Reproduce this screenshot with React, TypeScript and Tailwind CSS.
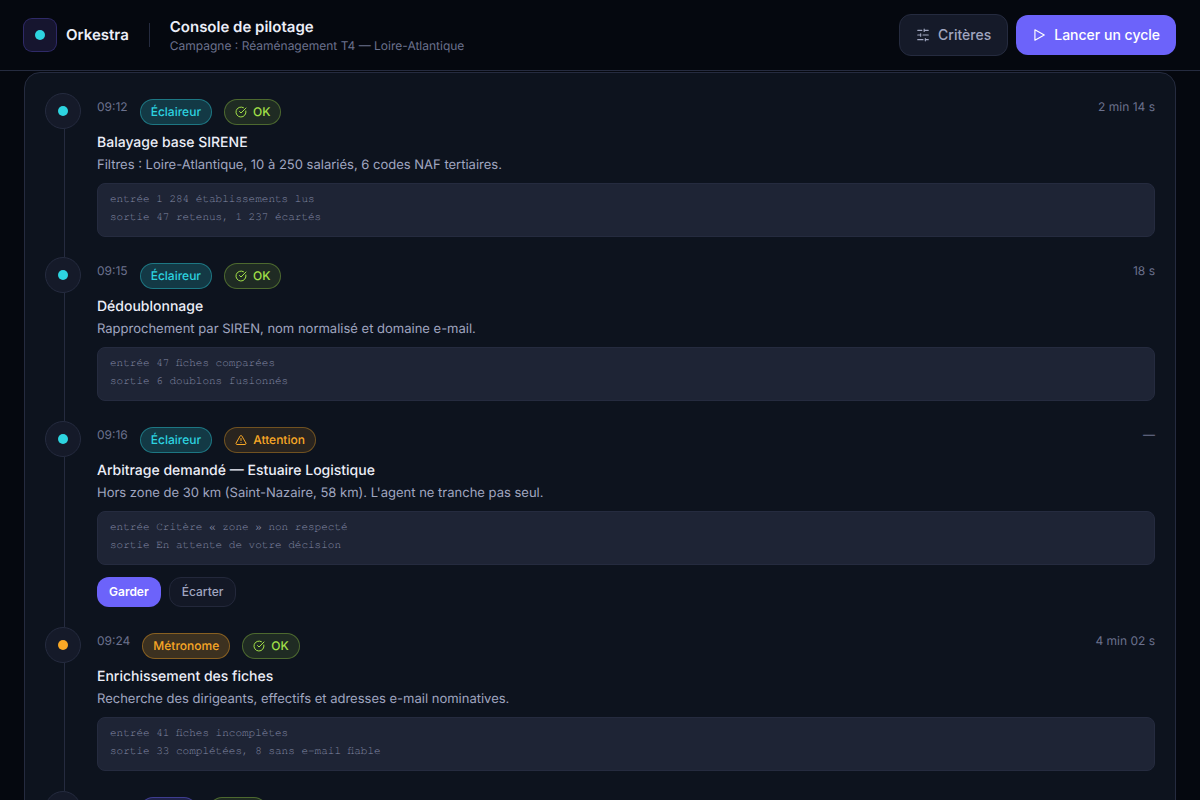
import type { ReactNode } from "react";

type Agent = "eclaireur" | "metronome" | "plume";
type Status = "ok" | "warning";

interface Step {
  time: string;
  agent: Agent;
  status: Status;
  duration: string;
  title: string;
  description: string;
  input: string;
  output: string;
  needsDecision?: boolean;
}

const AGENTS: Record<Agent, { label: string; dot: string; badge: string }> = {
  eclaireur: {
    label: "Éclaireur",
    dot: "bg-[#2dd4e0]",
    badge: "border-[#2dd4e0]/40 bg-[#2dd4e0]/20 text-[#2dd4e0]",
  },
  metronome: {
    label: "Métronome",
    dot: "bg-[#f9a826]",
    badge: "border-[#f9a826]/40 bg-[#f9a826]/20 text-[#f9a826]",
  },
  plume: {
    label: "Plume",
    dot: "bg-[#6c63fa]",
    badge: "border-[#6c63fa]/40 bg-[#6c63fa]/20 text-[#8f88ff]",
  },
};

const STEPS: Step[] = [
  {
    time: "09:12",
    agent: "eclaireur",
    status: "ok",
    duration: "2 min 14 s",
    title: "Balayage base SIRENE",
    description: "Filtres : Loire-Atlantique, 10 à 250 salariés, 6 codes NAF tertiaires.",
    input: "1 284 établissements lus",
    output: "47 retenus, 1 237 écartés",
  },
  {
    time: "09:15",
    agent: "eclaireur",
    status: "ok",
    duration: "18 s",
    title: "Dédoublonnage",
    description: "Rapprochement par SIREN, nom normalisé et domaine e-mail.",
    input: "47 fiches comparées",
    output: "6 doublons fusionnés",
  },
  {
    time: "09:16",
    agent: "eclaireur",
    status: "warning",
    duration: "—",
    title: "Arbitrage demandé — Estuaire Logistique",
    description: "Hors zone de 30 km (Saint-Nazaire, 58 km). L'agent ne tranche pas seul.",
    input: "Critère « zone » non respecté",
    output: "En attente de votre décision",
    needsDecision: true,
  },
  {
    time: "09:24",
    agent: "metronome",
    status: "ok",
    duration: "4 min 02 s",
    title: "Enrichissement des fiches",
    description: "Recherche des dirigeants, effectifs et adresses e-mail nominatives.",
    input: "41 fiches incomplètes",
    output: "33 complétées, 8 sans e-mail fiable",
  },
  {
    time: "09:31",
    agent: "plume",
    status: "ok",
    duration: "3 min 20 s",
    title: "Rédaction des messages",
    description: "Premiers messages préparés pour les fiches complètes.",
    input: "33 fiches complètes",
    output: "33 messages rédigés",
  },
];

function Icon({ className, children }: { className: string; children: ReactNode }) {
  return (
    <svg
      className={className}
      viewBox="0 0 24 24"
      fill="none"
      stroke="currentColor"
      strokeWidth={2}
      strokeLinecap="round"
      strokeLinejoin="round"
      aria-hidden="true"
    >
      {children}
    </svg>
  );
}

function SlidersIcon() {
  return (
    <Icon className="size-3.5">
      <path d="M21 4h-7M10 4H3M21 12h-9M8 12H3M21 20h-5M12 20H3M14 2v4M8 10v4M16 18v4" />
    </Icon>
  );
}

function StatusBadge({ status }: { status: Status }) {
  if (status === "warning") {
    return (
      <span className="inline-flex items-center gap-1.5 rounded-full border border-[#f9a826]/35 bg-[#f9a826]/12 px-2.5 py-1 text-xs font-medium text-[#f9a826]">
        <Icon className="size-3">
          <path d="m21.73 18-8-14a2 2 0 0 0-3.48 0l-8 14A2 2 0 0 0 4 21h16a2 2 0 0 0 1.73-3M12 9v4M12 17h.01" />
        </Icon>
        Attention
      </span>
    );
  }
  return (
    <span className="inline-flex items-center gap-1.5 rounded-full border border-[#a3e048]/35 bg-[#a3e048]/12 px-2.5 py-1 text-xs font-medium text-[#a3e048]">
      <Icon className="size-3">
        <path d="M21.8 10A10 10 0 1 1 17 3.34M9 11l3 3L22 4" />
      </Icon>
      OK
    </span>
  );
}

function TimelineItem({ step }: { step: Step }) {
  const agent = AGENTS[step.agent];

  return (
    <li className="flex gap-4">
      {/* Rail */}
      <div className="flex w-9 shrink-0 flex-col">
        <span className="flex size-9 items-center justify-center rounded-full border border-[#252b3f] bg-[#151a29]">
          <span className={`size-2.5 rounded-full ${agent.dot}`} />
        </span>
        <span className="ml-[19px] w-px flex-1 bg-[#252b3f]" />
      </div>

      <div className="min-w-0 flex-1 pt-1.5 pb-5">
        <div className="flex items-start gap-3">
          <time className="text-xs text-[#6b718d]">{step.time}</time>
          <span className={`inline-flex rounded-full border px-2.5 py-1 text-xs font-medium ${agent.badge}`}>
            {agent.label}
          </span>
          <StatusBadge status={step.status} />
          <span className="ml-auto text-xs text-[#6b718d]">{step.duration}</span>
        </div>

        <h3 className="mt-2 text-sm leading-5 font-medium text-[#eceef8]">{step.title}</h3>
        <p className="mt-0.5 text-[13px] leading-5 text-[#a0a6c0]">{step.description}</p>

        <div className="mt-2 rounded-lg border border-[#252b3f] bg-[#1e2435] px-3 pt-1.5 pb-2.5 font-['TeX_Gyre_Cursor','Liberation_Mono',monospace] text-[11px] leading-[18px] text-[#858ba6]">
          <div>entrée {step.input}</div>
          <div>sortie {step.output}</div>
        </div>

        {step.needsDecision && (
          <div className="mt-3 flex gap-2">
            <button type="button" className="rounded-xl bg-[#6c63fa] px-3 py-[7px] text-xs font-semibold text-white">
              Garder
            </button>
            <button
              type="button"
              className="rounded-xl border border-[#23283b] bg-[#131826] px-3 py-1.5 text-xs font-medium text-[#a0a6c0]"
            >
              Écarter
            </button>
          </div>
        )}
      </div>
    </li>
  );
}

export default function App() {
  return (
    <div className="min-h-screen bg-[#05080f] font-['Inter',sans-serif] text-[#eceef8] [text-rendering:geometricPrecision]">
      <header className="sticky top-0 z-10 flex h-[71px] items-center justify-between border-b border-[#252b3f] bg-[#05080f] px-6">
        <div className="flex items-center gap-5">
          <a href="#" className="flex items-center gap-2.5">
            <span className="flex size-8 items-center justify-center rounded-lg bg-[#16152f] ring-1 ring-[#2f2a68]">
              <span className="size-2.5 rounded-full bg-[#2dd4e0]" />
            </span>
            <span className="text-[15px] font-semibold">Orkestra</span>
          </a>
          <span className="h-6 w-px bg-[#252b3f]" />
          <div>
            <h1 className="text-[15px] leading-[22px] font-semibold">Console de pilotage</h1>
            <p className="text-xs text-[#6b718d]">Campagne : Réaménagement T4 — Loire-Atlantique</p>
          </div>
        </div>

        <div className="flex items-center gap-2">
          <button
            type="button"
            className="flex items-center gap-2 rounded-xl border border-[#252b3f] bg-[#151a29] px-4 py-2.5 text-sm font-medium text-[#a0a6c0]"
          >
            <SlidersIcon />
            Critères
          </button>
          <button
            type="button"
            className="flex items-center gap-2 rounded-xl bg-[#6c63fa] px-4 py-2.5 text-sm font-medium text-white"
          >
            <Icon className="size-3.5">
              <path d="M5 3l16 9-16 9z" />
            </Icon>
            Lancer un cycle
          </button>
        </div>
      </header>

      <main className="px-6 pt-px pb-6">
        <ol className="rounded-2xl border border-[#252b3f] bg-[#0d131e] p-5">
          {STEPS.map((step) => (
            <TimelineItem key={step.time} step={step} />
          ))}
        </ol>
      </main>
    </div>
  );
}
